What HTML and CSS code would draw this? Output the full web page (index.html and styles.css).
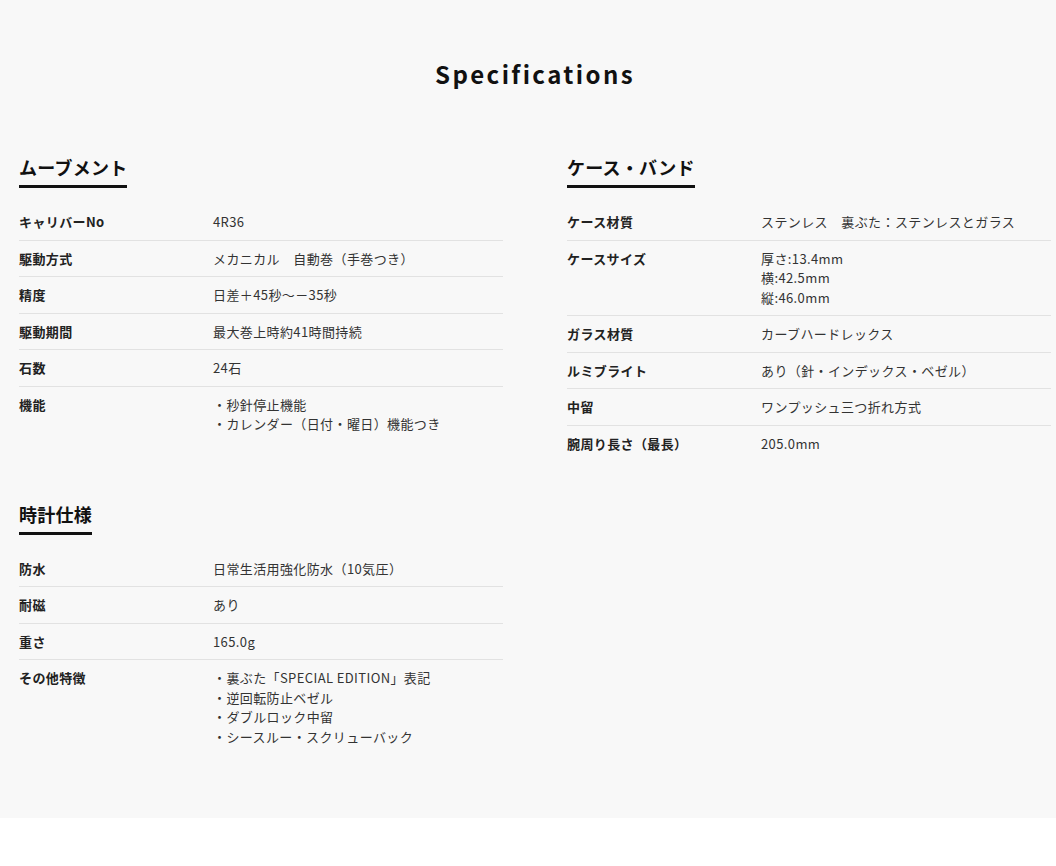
FILE: index.html
```html
<!DOCTYPE html>
<html lang="ja">
<head>
<meta charset="utf-8">
<title>Specifications</title>
<link rel="stylesheet" href="styles.css">
</head>
<body>
<section class="specs">
  <h2 class="specs-title">Specifications</h2>
  <div class="specs-grid">
    <div class="col">
      <div class="group">
        <h3 class="group-title">ムーブメント</h3>
        <dl class="spec-list">
          <div class="row"><dt>キャリバーNo</dt><dd>4R36</dd></div>
          <div class="row"><dt>駆動方式</dt><dd>メカニカル　自動巻（手巻つき）</dd></div>
          <div class="row"><dt>精度</dt><dd>日差＋45秒～－35秒</dd></div>
          <div class="row"><dt>駆動期間</dt><dd>最大巻上時約41時間持続</dd></div>
          <div class="row"><dt>石数</dt><dd>24石</dd></div>
          <div class="row"><dt>機能</dt><dd>・秒針停止機能<br>・カレンダー（日付・曜日）機能つき</dd></div>
        </dl>
      </div>
      <div class="group">
        <h3 class="group-title">時計仕様</h3>
        <dl class="spec-list">
          <div class="row"><dt>防水</dt><dd>日常生活用強化防水（10気圧）</dd></div>
          <div class="row"><dt>耐磁</dt><dd>あり</dd></div>
          <div class="row"><dt>重さ</dt><dd>165.0g</dd></div>
          <div class="row"><dt>その他特徴</dt><dd>・裏ぶた「SPECIAL EDITION」表記<br>・逆回転防止ベゼル<br>・ダブルロック中留<br>・シースルー・スクリューバック</dd></div>
        </dl>
      </div>
    </div>
    <div class="col">
      <div class="group">
        <h3 class="group-title">ケース・バンド</h3>
        <dl class="spec-list">
          <div class="row"><dt>ケース材質</dt><dd>ステンレス　裏ぶた：ステンレスとガラス</dd></div>
          <div class="row"><dt>ケースサイズ</dt><dd>厚さ:13.4mm<br>横:42.5mm<br>縦:46.0mm</dd></div>
          <div class="row"><dt>ガラス材質</dt><dd>カーブハードレックス</dd></div>
          <div class="row"><dt>ルミブライト</dt><dd>あり（針・インデックス・ベゼル）</dd></div>
          <div class="row"><dt>中留</dt><dd>ワンプッシュ三つ折れ方式</dd></div>
          <div class="row"><dt>腕周り長さ（最長）</dt><dd>205.0mm</dd></div>
        </dl>
      </div>
    </div>
  </div>
</section>
</body>
</html>
```

FILE: styles.css
```css
html, body {
  margin: 0;
  padding: 0;
  background: #ffffff;
}

body {
  font-family: "Noto Sans CJK JP", "Noto Sans", sans-serif;
  color: #222;
}

.specs {
  background: #f8f8f8;
  padding: 56px 5px 64px 19px;
}

.specs-title {
  margin: 0 0 60px;
  text-align: center;
  font-size: 24px;
  line-height: 36px;
  font-weight: 700;
  letter-spacing: 0.1em;
  color: #111;
}

.specs-grid {
  display: grid;
  grid-template-columns: 484px 484px;
  column-gap: 64px;
}

.group {
  margin-bottom: 57px;
}

.group:last-child {
  margin-bottom: 0;
}

.group-title {
  display: inline-block;
  margin: 0 0 16px;
  padding: 2px 0 4px;
  border-bottom: 3px solid #111;
  font-size: 18px;
  line-height: 27px;
  font-weight: 700;
  letter-spacing: 0.25px;
  color: #111;
}

.spec-list {
  margin: 0;
}

.row {
  display: grid;
  grid-template-columns: 194px 1fr;
  padding: 8px 0;
  border-bottom: 1px solid #e2e2e2;
  font-size: 13px;
  line-height: 19.5px;
  letter-spacing: 0.03em;
}

.row:last-child {
  border-bottom: none;
}

.row dt {
  font-weight: 700;
  color: #222;
}

.row dd {
  margin: 0;
  color: #333;
}
```
